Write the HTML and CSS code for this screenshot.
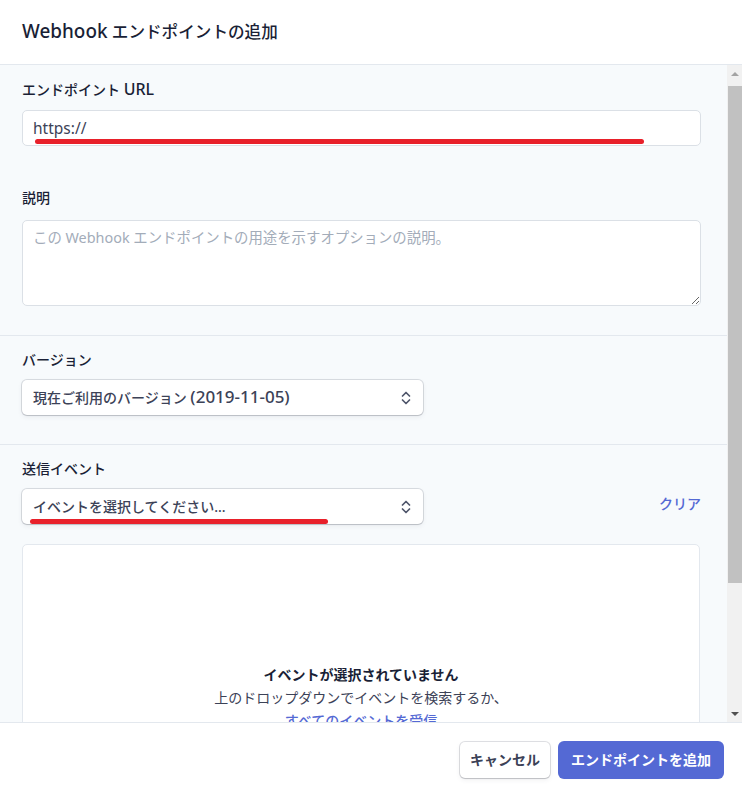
FILE: index.html
```html
<!DOCTYPE html>
<html lang="ja">
<head>
<meta charset="utf-8">
<title>Webhook エンドポイントの追加</title>
<link rel="stylesheet" href="styles.css">
</head>
<body>
<div class="modal">
  <header class="head">
    <h1 class="title"><span class="en">Webhook</span> エンドポイントの追加</h1>
  </header>
  <div class="main">
    <div class="scroll">
      <section class="sec">
        <div class="lbl">エンドポイント <span class="en">URL</span></div>
        <div class="field">
          <input class="input" type="text" value="https://">
          <span class="mark mark-url"></span>
        </div>
        <div class="lbl lbl-desc">説明</div>
        <textarea class="textarea" placeholder="この Webhook エンドポイントの用途を示すオプションの説明。"></textarea>
      </section>
      <section class="sec">
        <div class="lbl">バージョン</div>
        <div class="select">
          <span class="select-text">現在ご利用のバージョン <span class="en">(2019-11-05)</span></span>
          <svg class="chev" width="10" height="14" viewBox="0 0 10 14"><path d="M1.5 5 L5 1.5 L8.5 5 M1.5 9 L5 12.5 L8.5 9" fill="none" stroke="#4f566b" stroke-width="1.7" stroke-linecap="round" stroke-linejoin="round"/></svg>
        </div>
      </section>
      <section class="sec sec-events">
        <div class="lbl">送信イベント</div>
        <div class="row">
          <div class="select">
            <span class="select-text">イベントを選択してください...</span>
            <svg class="chev" width="10" height="14" viewBox="0 0 10 14"><path d="M1.5 5 L5 1.5 L8.5 5 M1.5 9 L5 12.5 L8.5 9" fill="none" stroke="#4f566b" stroke-width="1.7" stroke-linecap="round" stroke-linejoin="round"/></svg>
            <span class="mark mark-event"></span>
          </div>
          <a class="clear">クリア</a>
        </div>
        <div class="box">
          <div class="box-title">イベントが選択されていません</div>
          <div class="box-sub">上のドロップダウンでイベントを検索するか、</div>
          <a class="box-link">すべてのイベントを受信</a>
        </div>
      </section>
    </div>
    <div class="scrollbar">
      <div class="sb-btn"><span class="tri-up"></span></div>
      <div class="sb-track"><div class="sb-thumb"></div></div>
      <div class="sb-btn"><span class="tri-down"></span></div>
    </div>
  </div>
  <footer class="foot">
    <button class="btn btn-cancel">キャンセル</button>
    <button class="btn btn-primary">エンドポイントを追加</button>
  </footer>
</div>
</body>
</html>
```

FILE: styles.css
```css
* { box-sizing: border-box; }
html, body { margin: 0; padding: 0; }
body {
  width: 742px;
  height: 791px;
  overflow: hidden;
  font-family: "Noto Sans", "Noto Sans CJK JP", sans-serif;
  font-size: 14px;
  color: #1a1f36;
  background: #ffffff;
}
.en { font-size: 1.14em; }
.modal {
  display: flex;
  flex-direction: column;
  height: 791px;
}
.head {
  height: 65px;
  border-bottom: 1px solid #e3e8ee;
  display: flex;
  align-items: center;
  padding: 0 22px 2px;
  background: #fff;
}
.title {
  margin: 0;
  font-size: 16.6px;
  font-weight: 500;
  line-height: 24px;
  color: #1a1f36;
}
.main {
  height: 657px;
  display: flex;
  background: #f7fafc;
}
.scroll {
  flex: 1;
  overflow: hidden;
}
.sec {
  padding: 14px 26px 29px 22px;
  border-bottom: 1px solid #e3e8ee;
}
.lbl {
  font-size: 14px;
  line-height: 20px;
  font-weight: 500;
  color: #1a1f36;
  margin-bottom: 10px;
}
.lbl-desc { margin-top: 42px; margin-bottom: 12px; }
.field { position: relative; }
.input, .textarea {
  display: block;
  width: 100%;
  font-family: "Noto Sans", "Noto Sans CJK JP", sans-serif;
  color: #3c4257;
  background: #fff;
  border: 1px solid #dbe0e6;
  border-radius: 5px;
  outline: none;
}
.input {
  height: 36px;
  padding: 0 10px;
  font-size: 15.5px;
  line-height: 34px;
}
.textarea {
  height: 86px;
  padding: 7px 10px;
  font-size: 14.4px;
  line-height: 20px;
  resize: vertical;
}
.textarea::placeholder { color: #a3acb9; }
.mark {
  position: absolute;
  height: 5px;
  border-radius: 3px;
  background: #e8202a;
}
.mark-url { left: 13px; width: 609px; top: 29px; }
.mark-event { left: 8px; width: 298px; top: 30px; }
.select {
  position: relative;
  width: 401px;
  height: 35px;
  background: #fff;
  border-radius: 5px;
  box-shadow: 0 0 0 1px rgba(60, 66, 87, 0.16), 0 1px 1px rgba(0, 0, 0, 0.10), 0 2px 5px rgba(60, 66, 87, 0.08);
  display: flex;
  align-items: center;
  justify-content: space-between;
  padding: 0 12px 0 11px;
  color: #3c4257;
  font-weight: 500;
}
.select-text { line-height: 20px; white-space: nowrap; }
.select-text .en { font-size: 17px; }
.chev { display: block; }
.row {
  display: flex;
  align-items: center;
  justify-content: space-between;
}
.clear {
  color: #5469d4;
  font-weight: 500;
  line-height: 20px;
  margin-top: -5px;
}
.sec-events { border-bottom: 0; padding-bottom: 0; }
.box {
  margin-top: 20px;
  margin-right: 1px;
  height: 320px;
  background: #fff;
  border: 1px solid #e3e8ee;
  border-radius: 5px;
  padding-top: 118px;
  text-align: center;
  line-height: 23px;
}
.box-title { font-weight: 600; color: #1a1f36; }
.box-sub { color: #3c4257; }
.box-link { color: #5469d4; font-weight: 500; }
.scrollbar {
  width: 15px;
  background: #f1f1f1;
  display: flex;
  flex-direction: column;
}
.sb-btn {
  height: 17px;
  display: flex;
  align-items: center;
  justify-content: center;
}
.tri-up {
  width: 0; height: 0;
  border-left: 4px solid transparent;
  border-right: 4px solid transparent;
  border-bottom: 4px solid #a3a3a3;
}
.tri-down {
  width: 0; height: 0;
  border-left: 4px solid transparent;
  border-right: 4px solid transparent;
  border-top: 4px solid #505050;
}
.sb-track { flex: 1; padding: 4px 0 0 1px; }
.sb-thumb {
  height: 497px;
  background: #c1c1c1;
}
.foot {
  flex: 1;
  border-top: 1px solid #e3e8ee;
  display: flex;
  justify-content: flex-end;
  align-items: flex-start;
  gap: 9px;
  padding: 19px 19px 0 0;
  background: #fff;
}
.btn {
  height: 36px;
  border: 0;
  border-radius: 5px;
  font-family: "Noto Sans", "Noto Sans CJK JP", sans-serif;
  font-size: 14px;
  font-weight: 600;
  padding: 0 12px;
  line-height: 36px;
}
.btn-cancel {
  background: #fff;
  color: #3c4257;
  padding: 0 10px;
  box-shadow: 0 0 0 1px rgba(60, 66, 87, 0.16), 0 1px 1px rgba(0, 0, 0, 0.12), 0 2px 5px rgba(60, 66, 87, 0.08);
}
.btn-primary {
  background: #5469d4;
  color: #fff;
  box-shadow: 0 0 0 1px #5469d4, 0 1px 1px rgba(0, 0, 0, 0.12);
}
```
